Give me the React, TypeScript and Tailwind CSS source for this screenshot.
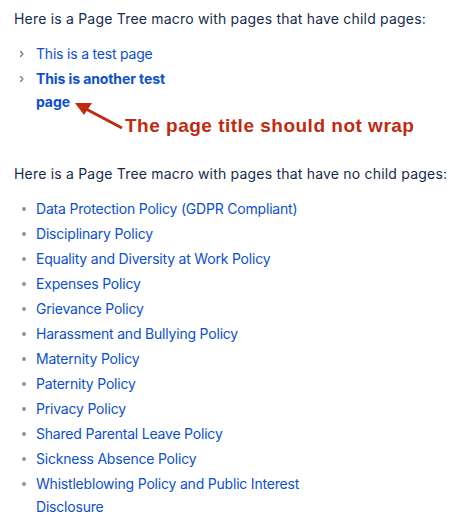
import React from "react";

const policies = [
  "Data Protection Policy (GDPR Compliant)",
  "Disciplinary Policy",
  "Equality and Diversity at Work Policy",
  "Expenses Policy",
  "Grievance Policy",
  "Harassment and Bullying Policy",
  "Maternity Policy",
  "Paternity Policy",
  "Privacy Policy",
  "Shared Parental Leave Policy",
  "Sickness Absence Policy",
  "Whistleblowing Policy and Public Interest Disclosure",
];

function Chevron() {
  return (
    <svg width="8" height="8" viewBox="0 0 8 8" className="block">
      <path d="M2.5 1.5 L5 4 L2.5 6.5" fill="none" stroke="#626f86" strokeWidth="1.1" strokeLinecap="round" strokeLinejoin="round" />
    </svg>
  );
}

export default function App() {
  return (
    <div
      className="relative w-[450px] h-[527px] bg-white overflow-hidden pl-[14px] pt-[7px] text-[14px] leading-[23px] text-[#172b4d]"
      style={{ fontFamily: "Inter, 'Noto Sans', sans-serif" }}
    >
      <p className="tracking-[0.2px]">Here is a Page Tree macro with pages that have child pages:</p>
      <ul className="mt-[12px] flex flex-col gap-[2px]">
        <li className="flex items-start">
          <span className="w-[22px] h-[23px] flex items-center justify-start pl-[4px]">
            <Chevron />
          </span>
          <a className="text-[#0c4fcf] tracking-[-0.2px]">This is a test page</a>
        </li>
        <li className="flex items-start">
          <span className="w-[22px] h-[23px] flex items-center justify-start pl-[4px]">
            <Chevron />
          </span>
          <a className="text-[#0c4fcf] font-bold max-w-[140px] tracking-[-0.1px]">This is another test page</a>
        </li>
      </ul>
      <p className="mt-[49px] tracking-[0.2px]">Here is a Page Tree macro with pages that have no child pages:</p>
      <ul className="mt-[12px] flex flex-col gap-[2px]">
        {policies.map((p) => (
          <li key={p} className="flex items-start">
            <span className="w-[22px] h-[23px] flex items-center pl-[8px]">
              <span className="block w-[4px] h-[4px] rounded-full bg-[#8993a4]" />
            </span>
            <a className="text-[#0c4fcf] max-w-[270px] tracking-[-0.2px]">{p}</a>
          </li>
        ))}
      </ul>

      <svg className="absolute left-0 top-0" width="450" height="527" viewBox="0 0 450 527">
        <line x1="86" y1="109" x2="122" y2="128" stroke="#bf2a10" strokeWidth="3" />
        <polygon points="75,103 92,103 84,115" fill="#bf2a10" />
      </svg>
      <div
        className="absolute left-[125px] top-[114px] text-[19px] leading-[23px] font-bold tracking-[0.5px] text-[#bf2a10] whitespace-nowrap"
        style={{ fontFamily: "'Liberation Sans', Arial, sans-serif", textShadow: "0 0 2px #fff" }}
      >
        The page title should not wrap
      </div>
    </div>
  );
}
